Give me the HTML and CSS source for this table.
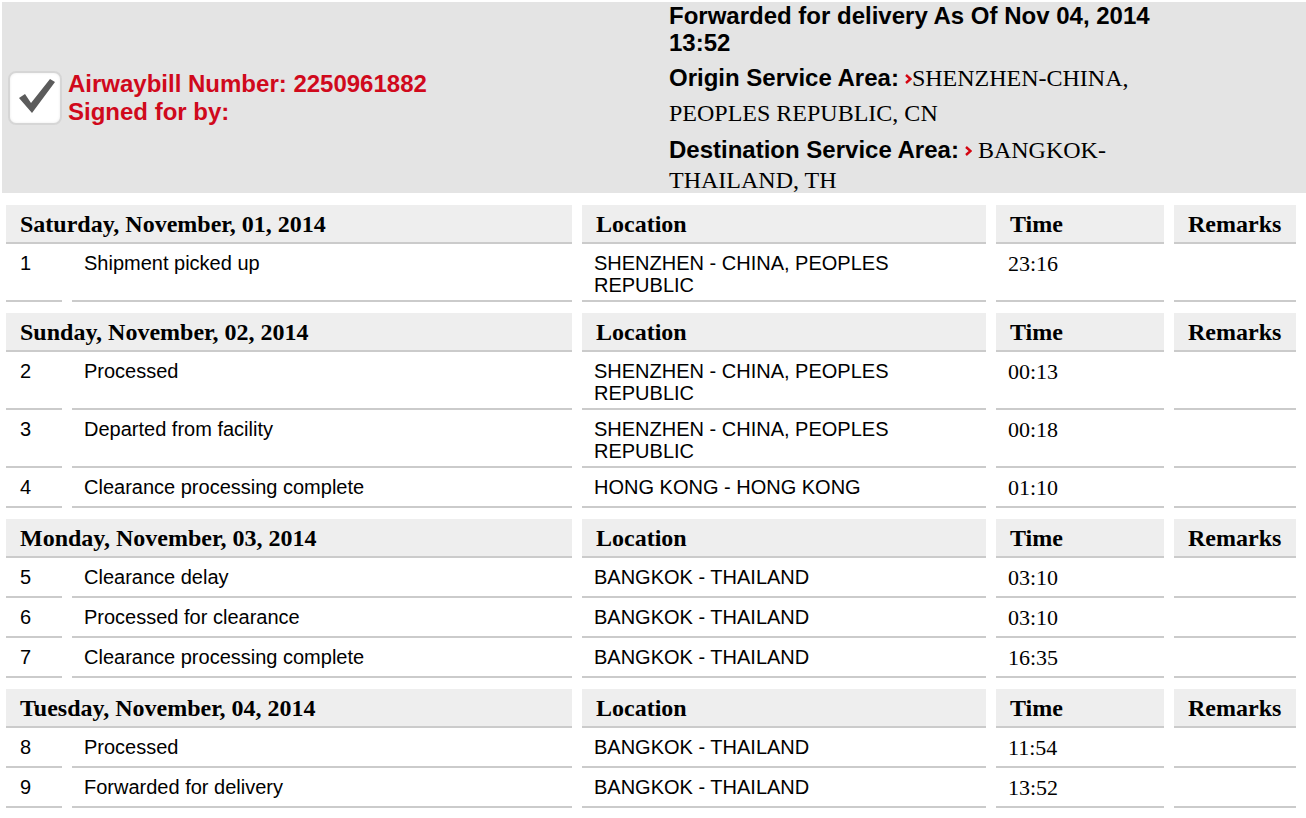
FILE: index.html
```html
<!DOCTYPE html>
<html lang="en">
<head>
    <meta charset="UTF-8">
    <title>Tracking - 2250961882</title>
    <link rel="stylesheet" href="styles.css">
</head>
<body>
    <!-- Resumo do envio -->
    <div class="summary">
        <div class="summary-left">
            <span class="check-box">
                <svg width="46" height="44" viewBox="0 0 46 44"><polygon points="6,21 12,17 18,26 37,2 42,5 19,36" fill="#5b5b5b"/></svg>
            </span>
            <div class="awb">
                <div>Airwaybill Number: 2250961882</div>
                <div>Signed for by:</div>
            </div>
        </div>
        <div class="summary-right">
            <p class="status">Forwarded for delivery As Of Nov 04, 2014 13:52</p>
            <p class="area origin"><b>Origin Service Area:</b> <svg class="chev" width="7" height="10" viewBox="0 0 7 10"><path d="M1 1 L5.5 5 L1 9" fill="none" stroke="#d40511" stroke-width="2.4"/></svg>SHENZHEN-CHINA, PEOPLES REPUBLIC, CN</p>
            <p class="area dest"><b>Destination Service Area:</b> <svg class="chev" width="7" height="10" viewBox="0 0 7 10"><path d="M1 1 L5.5 5 L1 9" fill="none" stroke="#d40511" stroke-width="2.4"/></svg> BANGKOK-THAILAND, TH</p>
        </div>
    </div>

    <!-- Historico -->
    <div class="tracking">
        <div class="day">
            <div class="row head">
                <div class="cell date">Saturday, November, 01, 2014</div>
                <div class="cell">Location</div>
                <div class="cell">Time</div>
                <div class="cell">Remarks</div>
            </div>
            <div class="row">
                <div class="cell num">1</div>
                <div class="cell">Shipment picked up</div>
                <div class="cell">SHENZHEN - CHINA, PEOPLES REPUBLIC</div>
                <div class="cell time">23:16</div>
                <div class="cell"></div>
            </div>
        </div>

        <div class="day">
            <div class="row head">
                <div class="cell date">Sunday, November, 02, 2014</div>
                <div class="cell">Location</div>
                <div class="cell">Time</div>
                <div class="cell">Remarks</div>
            </div>
            <div class="row">
                <div class="cell num">2</div>
                <div class="cell">Processed</div>
                <div class="cell">SHENZHEN - CHINA, PEOPLES REPUBLIC</div>
                <div class="cell time">00:13</div>
                <div class="cell"></div>
            </div>
            <div class="row">
                <div class="cell num">3</div>
                <div class="cell">Departed from facility</div>
                <div class="cell">SHENZHEN - CHINA, PEOPLES REPUBLIC</div>
                <div class="cell time">00:18</div>
                <div class="cell"></div>
            </div>
            <div class="row">
                <div class="cell num">4</div>
                <div class="cell">Clearance processing complete</div>
                <div class="cell">HONG KONG - HONG KONG</div>
                <div class="cell time">01:10</div>
                <div class="cell"></div>
            </div>
        </div>

        <div class="day">
            <div class="row head">
                <div class="cell date">Monday, November, 03, 2014</div>
                <div class="cell">Location</div>
                <div class="cell">Time</div>
                <div class="cell">Remarks</div>
            </div>
            <div class="row">
                <div class="cell num">5</div>
                <div class="cell">Clearance delay</div>
                <div class="cell">BANGKOK - THAILAND</div>
                <div class="cell time">03:10</div>
                <div class="cell"></div>
            </div>
            <div class="row">
                <div class="cell num">6</div>
                <div class="cell">Processed for clearance</div>
                <div class="cell">BANGKOK - THAILAND</div>
                <div class="cell time">03:10</div>
                <div class="cell"></div>
            </div>
            <div class="row">
                <div class="cell num">7</div>
                <div class="cell">Clearance processing complete</div>
                <div class="cell">BANGKOK - THAILAND</div>
                <div class="cell time">16:35</div>
                <div class="cell"></div>
            </div>
        </div>

        <div class="day">
            <div class="row head">
                <div class="cell date">Tuesday, November, 04, 2014</div>
                <div class="cell">Location</div>
                <div class="cell">Time</div>
                <div class="cell">Remarks</div>
            </div>
            <div class="row">
                <div class="cell num">8</div>
                <div class="cell">Processed</div>
                <div class="cell">BANGKOK - THAILAND</div>
                <div class="cell time">11:54</div>
                <div class="cell"></div>
            </div>
            <div class="row">
                <div class="cell num">9</div>
                <div class="cell">Forwarded for delivery</div>
                <div class="cell">BANGKOK - THAILAND</div>
                <div class="cell time">13:52</div>
                <div class="cell"></div>
            </div>
        </div>
    </div>
</body>
</html>
```

FILE: styles.css
```css
* {
    margin: 0;
    padding: 0;
    box-sizing: border-box;
}

body {
    background: #fff;
    color: #000;
    font-family: 'Liberation Sans', Arial, sans-serif;
}

/* Resumo */
.summary {
    display: flex;
    height: 191px;
    margin: 2px 0 0 2px;
    background: #e4e4e4;
}

.summary-left {
    width: 667px;
    display: flex;
    align-items: center;
    gap: 6px;
    padding-left: 6px;
}

.check-box {
    width: 54px;
    height: 54px;
    display: flex;
    align-items: center;
    justify-content: center;
    background: #fff;
    border: 2px solid #d6d6d6;
    border-radius: 8px;
    box-shadow: inset 0 0 3px rgba(0, 0, 0, 0.08);
}

.check-box svg {
    margin: 2px 0 0 2px;
}

.awb {
    color: #d0091c;
    font-weight: bold;
    font-size: 24px;
    line-height: 28px;
}

.summary-right {
    width: 500px;
}

.status {
    font-weight: bold;
    font-size: 24px;
    line-height: 27px;
}

.area {
    font-family: 'Liberation Serif', 'Times New Roman', serif;
    font-size: 24px;
    line-height: 35px;
    margin-top: 4px;
}

.area b {
    font-family: 'Liberation Sans', Arial, sans-serif;
}

.area.dest {
    margin-top: 4px;
    line-height: 30px;
}

.chev {
    vertical-align: 2px;
}

/* Historico */
.tracking {
    padding: 12px 0 0 6px;
}

.day + .day {
    margin-top: 11px;
}

.row {
    display: grid;
    grid-template-columns: 56px 500px 404px 168px 122px;
    column-gap: 10px;
}

.cell {
    border-bottom: 2px solid #cbcbcb;
    padding: 8px 12px 4px;
    font-size: 20px;
    line-height: 22px;
}

.cell.num {
    padding-left: 14px;
}

.cell.time {
    font-family: 'Liberation Serif', 'Times New Roman', serif;
    font-size: 22px;
    line-height: 20px;
    padding-top: 10px;
    padding-bottom: 8px;
}

.head .cell {
    background: #eee;
    font-family: 'Liberation Serif', 'Times New Roman', serif;
    font-weight: bold;
    font-size: 24px;
    line-height: 28px;
    padding: 5px 14px 4px;
}

.head .date {
    grid-column: span 2;
}
```
